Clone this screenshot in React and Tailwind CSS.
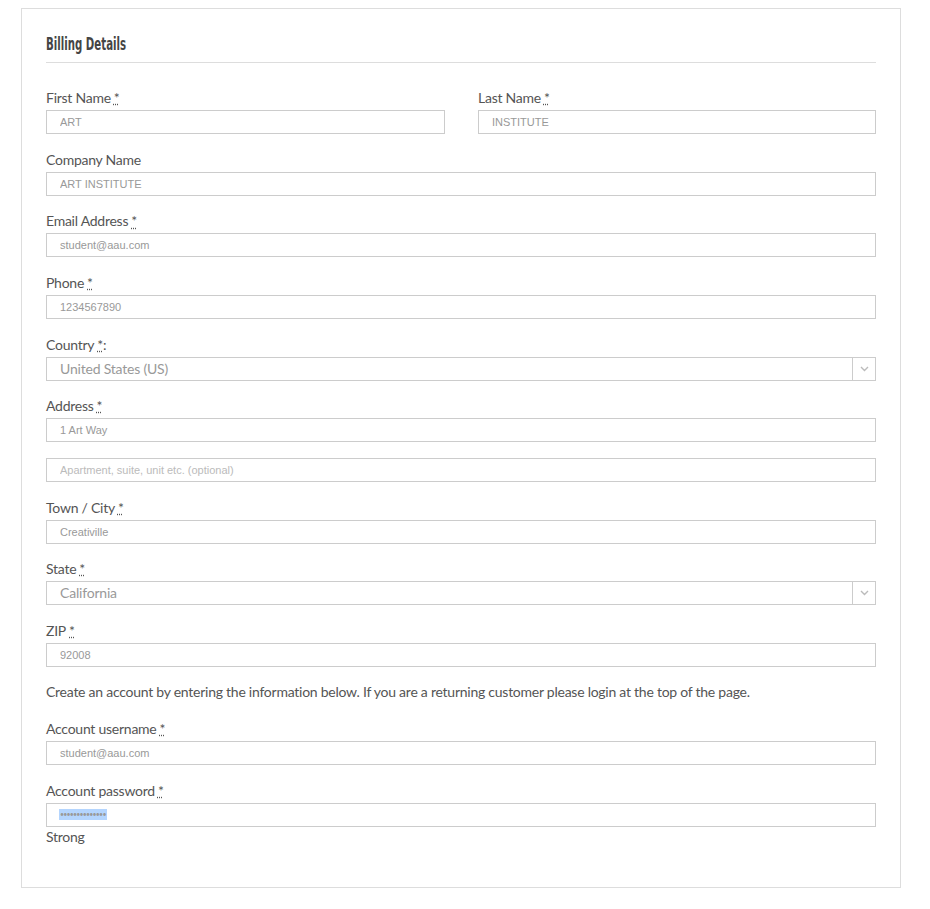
import React from "react";

const labelCls = "block h-5 leading-5 text-[14px] tracking-[-0.25px] text-[#555]";
const inputCls =
  "block w-full h-6 border border-[#ccc] bg-white pl-[13px] text-[11px] text-[#999] outline-none";
const gapCls = "mt-[15.67px]";

function Req() {
  return <abbr title="required" className="ml-[3px] text-[#555]">*</abbr>;
}

function Field({ label, value, required = true, colon = false, className = "" }) {
  return (
    <div className={className}>
      <label className={labelCls}>
        {label}
        {required && <Req />}
        {colon && ":"}
      </label>
      <input
        className={`${inputCls} mt-[2px]`}
        style={{ fontFamily: "'Liberation Sans', Arial, sans-serif" }}
        defaultValue={value}
        readOnly
      />
    </div>
  );
}

function SelectField({ label, value, colon = false, className = "" }) {
  return (
    <div className={className}>
      <label className={labelCls}>
        {label}
        <Req />
        {colon && ":"}
      </label>
      <div className="mt-[2px] flex h-6 w-full border border-[#ccc] bg-white">
        <div className="flex-1 pl-[13px] leading-[22px] text-[14px] tracking-[-0.2px] text-[#999]">{value}</div>
        <div className="flex w-[23px] items-center justify-center border-l border-[#ccc]">
          <svg width="9" height="6" viewBox="0 0 9 6">
            <path d="M1 1l3.5 3.5L8 1" fill="none" stroke="#bbb" strokeWidth="1.4" />
          </svg>
        </div>
      </div>
    </div>
  );
}

export default function App() {
  return (
    <div className="min-h-screen bg-white pt-2 pl-[21px]" style={{ fontFamily: "Lato, 'Open Sans', sans-serif" }}>
      <div className="w-[880px] border border-[#ddd] px-6 pt-[23px] pb-[40px]">
        <div className="border-b border-[#ddd] pb-[6px]">
          <h3
            className="inline-block origin-left scale-x-[0.63] text-[18px] font-bold leading-6 text-[#444]"
            style={{ fontFamily: "'DejaVu Sans Condensed', 'DejaVu Sans', sans-serif" }}
          >
            Billing Details
          </h3>
        </div>

        <div className="mt-[25px] grid grid-cols-[399px_398px] gap-x-[33px]">
          <Field label="First Name" value="ART" />
          <Field label="Last Name" value="INSTITUTE" />
        </div>

        <Field className={gapCls} label="Company Name" value="ART INSTITUTE" required={false} />
        <Field className={gapCls} label="Email Address" value="student@aau.com" />
        <Field className={gapCls} label="Phone" value="1234567890" />
        <SelectField className={gapCls} label="Country" value="United States (US)" colon />
        <Field className={gapCls} label="Address" value="1 Art Way" />
        <input
          className={`${inputCls} ${gapCls} placeholder:text-[#bbb]`}
          style={{ fontFamily: "'Liberation Sans', Arial, sans-serif" }}
          placeholder="Apartment, suite, unit etc. (optional)"
        />
        <Field className={gapCls} label="Town / City" value="Creativille" />
        <SelectField className={gapCls} label="State" value="California" />
        <Field className={gapCls} label="ZIP" value="92008" />

        <p className="mt-[15px] leading-5 text-[14px] tracking-[-0.25px] text-[#555]">
          Create an account by entering the information below. If you are a returning customer please login at the top of the page.
        </p>

        <Field className="mt-[17px]" label="Account username" value="student@aau.com" />

        <div className="mt-4">
          <label className={labelCls}>
            Account password
            <Req />
          </label>
          <div className="mt-[2px] flex h-6 w-full items-center border border-[#ccc] bg-white pl-3">
            <span className="bg-[#b4d5fe] px-px leading-[11px] text-[7px] tracking-[-0.8px] text-[#999]">
              ••••••••••••••
            </span>
          </div>
        </div>
        <div className="leading-5 text-[14px] tracking-[-0.25px] text-[#555]">Strong</div>
      </div>
    </div>
  );
}
